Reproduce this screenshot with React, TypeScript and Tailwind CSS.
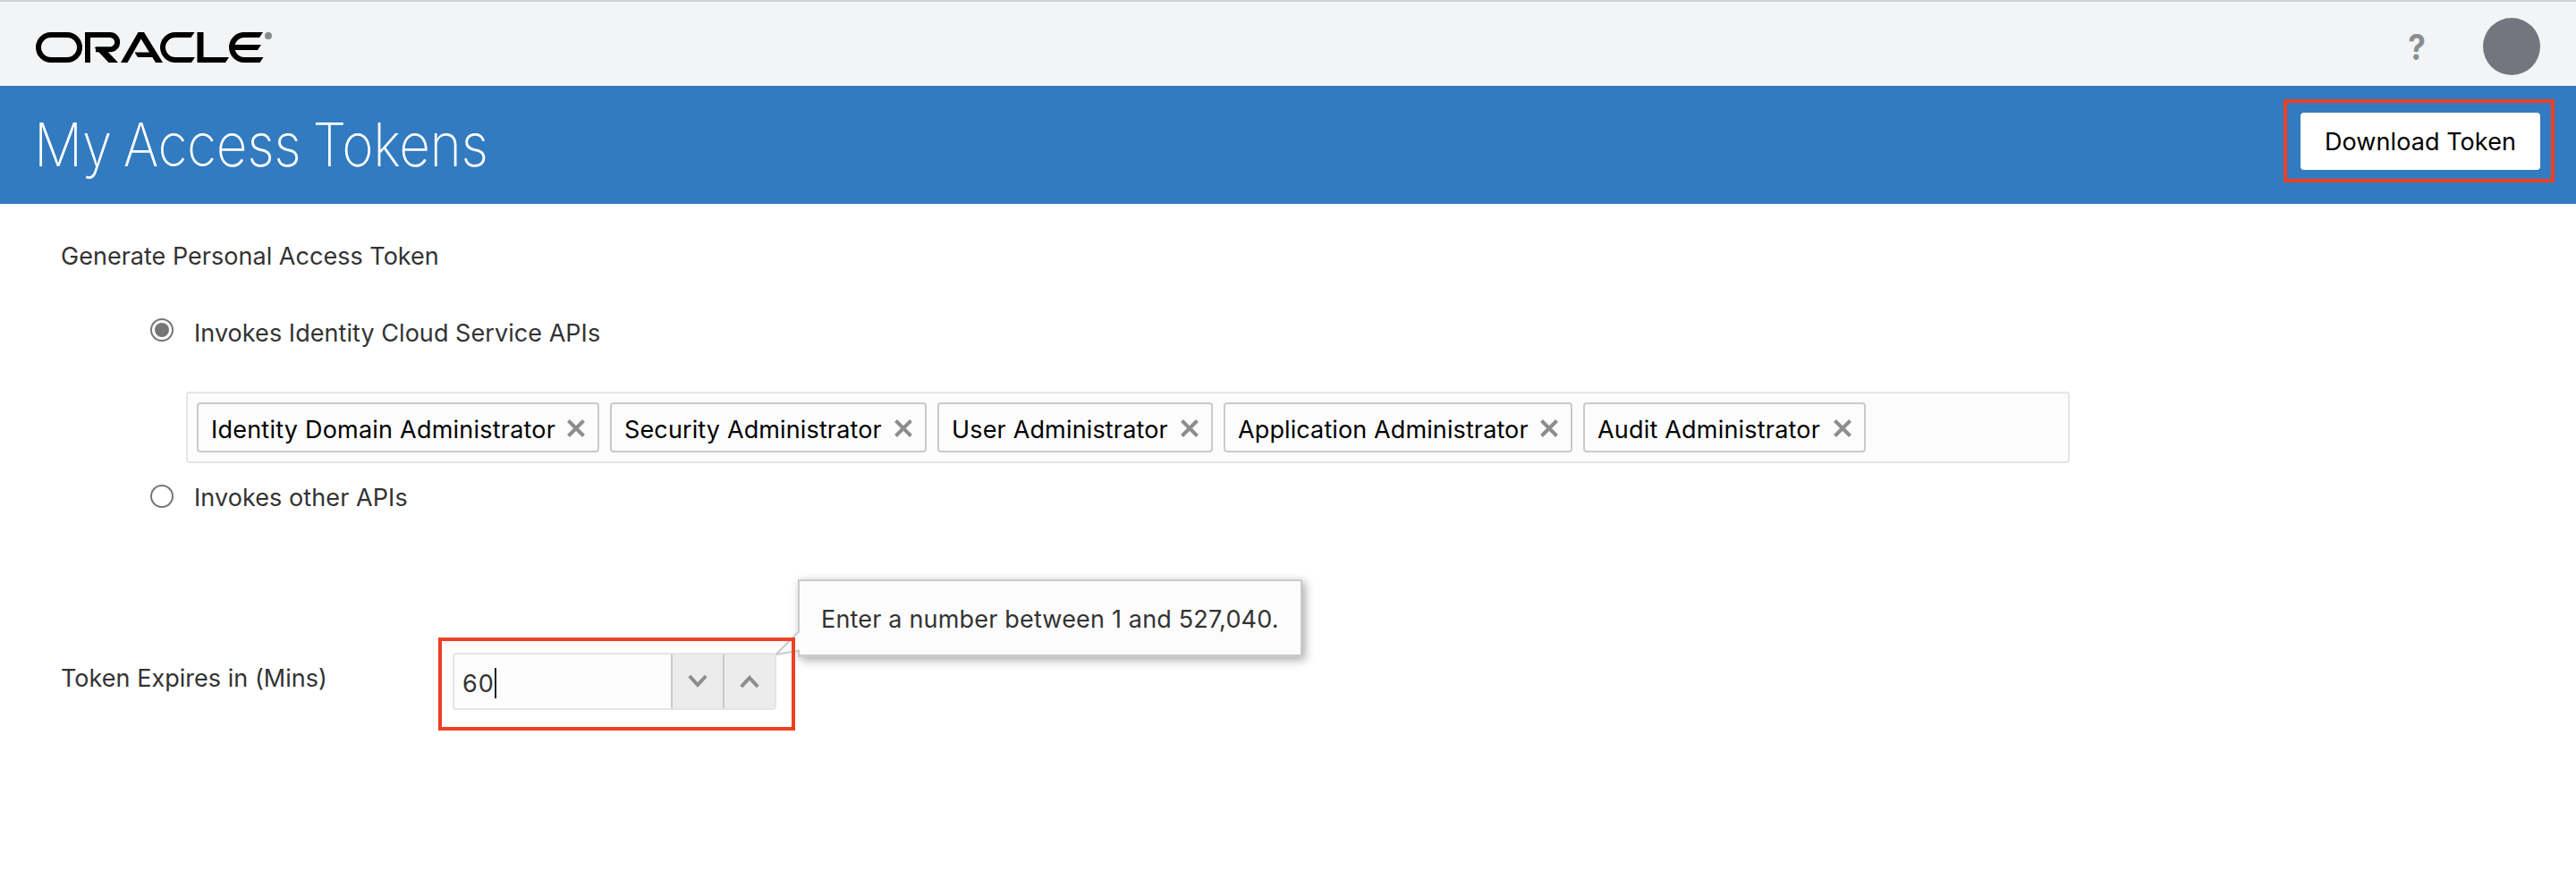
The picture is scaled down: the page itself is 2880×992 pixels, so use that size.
const ROLES = [
  { name: "Identity Domain Administrator", width: "w-[450px]", tracking: "tracking-[0.22px]" },
  { name: "Security Administrator", width: "w-[354px]", tracking: "tracking-[0.13px]" },
  { name: "User Administrator", width: "w-[308px]", tracking: "tracking-[0.16px]" },
  { name: "Application Administrator", width: "w-[390px]", tracking: "tracking-[0.11px]" },
  { name: "Audit Administrator", width: "w-[316px]", tracking: "tracking-[0.2px]" },
];

function OracleLogo() {
  return (
    <svg width="272" height="36" viewBox="0 0 272 36" fill="none" stroke="#000" strokeWidth="6" role="img" aria-label="Oracle">
      <rect x="3" y="3" width="46" height="28" rx="14" />
      <path d="M58 34V3H83a8 8 0 0 1 0 16.300H67" strokeWidth="6" />
      <path d="M65.500 17H76L92 34H81.500Z" fill="#000" stroke="none" />
      <path d="M95 34L114.500 0H121L142 34H134L117.700 7.500L102.500 34Z" fill="#000" stroke="none" />
      <path d="M110.500 22.500H133L136 28H114Z" fill="#000" stroke="none" />
      <path d="M177.500 0L173.500 6H156a11 11 0 0 0 0 22H178L174 34H156a17 17 0 0 1 0-34Z" fill="#000" stroke="none" />
      <path d="M180.500 0H187.500V28H216L212 34H180.500Z" fill="#000" stroke="none" />
      <path d="M254 0L250 6H233a11 11 0 0 0-10.300 8H252L248 20H222.700a11 11 0 0 0 10.300 8H254.500L250.500 34H233a17 17 0 0 1 0-34Z" fill="#000" stroke="none" />
      <circle cx="260" cy="4" r="3.200" fill="#b5b6b8" stroke="#808284" strokeWidth="1.500" />
      <path d="M259 6V2.500H261V4H259M260 4L261.300 6" stroke="#666" strokeWidth="0.900" />
    </svg>
  );
}

function Radio({ checked = false }: { checked?: boolean }) {
  return (
    <span className="flex size-[26px] items-center justify-center rounded-full border-2 border-[#767676] bg-white">
      {checked && <span className="size-4 rounded-full bg-[#767676]" />}
    </span>
  );
}

function Cross() {
  return (
    <svg className="mt-0.5" width="20" height="20" viewBox="0 0 20 20" fill="none" stroke="#8b8d8f" strokeWidth="4">
      <path d="M1.500 1.500L18.500 18.500M18.500 1.500L1.500 18.500" />
    </svg>
  );
}

function Chevron({ up = false }: { up?: boolean }) {
  return (
    <svg width="22" height="16" viewBox="0 0 22 16" fill="none" stroke="#8b8d8f" strokeWidth="4">
      <path d={up ? "M1.800 14L11 4L20.200 14" : "M1.800 2L11 12L20.200 2"} />
    </svg>
  );
}

export default function App() {
  return (
    <div className="h-[992px] w-[2880px] overflow-hidden bg-white font-['Inter',sans-serif] text-[27px] leading-10 text-[#333]">
      <header className="flex h-24 items-start justify-between border-t-2 border-[#d1d2d4] bg-[#f3f4f6] pl-10 pr-10">
        <div className="pt-[34px]">
          <OracleLogo />
        </div>
        <div className="flex items-center gap-16 pt-[18px]">
          <span className="text-[39px] font-bold text-[#8b8d90]">
            <span className="inline-block origin-right scale-x-90 pt-px">?</span>
          </span>
          <span className="size-16 rounded-full bg-[#74767f]" />
        </div>
      </header>

      <section className="flex h-[132px] items-start justify-between bg-[#327bc0] pl-[38px] pr-6">
        <h1 className="origin-left scale-x-90 pt-[21px] text-[67px] leading-[90px] font-[250] tracking-[-0.35px] text-white [word-spacing:-4px]">
          My Access Tokens
        </h1>
        <div className="mt-[15px] h-[93px] w-[303px] border-4 border-[#ee4023] pt-[11px] pl-[15px]">
          <button className="h-16 w-[268px] rounded bg-white pt-px text-[27px] leading-[63px] tracking-[0.08px] text-black">
            Download Token
          </button>
        </div>
      </section>

      <main className="pl-[68px] pt-[39px]">
        <h2 className="tracking-[0.02px]">Generate Personal Access Token</h2>

        <div className="mt-[46px] flex h-10 gap-[23px] pl-[100px]">
          <span className="pt-[3px]"><Radio checked /></span>
          <span className="tracking-[0.05px]">Invokes Identity Cloud Service APIs</span>
        </div>

        <div className="mt-[45px] ml-[140px] flex h-20 w-[2106px] items-center gap-3 rounded border-2 border-[#e5e5e5] bg-[#fcfcfc] pl-[10px]">
          {ROLES.map((role) => (
            <div key={role.name} className={`flex h-14 shrink-0 items-center justify-between rounded border-2 border-[#c9cacb] pr-[14px] pl-[14px] whitespace-nowrap text-black ${role.width} ${role.tracking}`}>
              <span className="pt-[5px]">{role.name}</span>
              <Cross />
            </div>
          ))}
        </div>

        <div className="mt-[19px] flex h-10 gap-[23px] pl-[100px]">
          <span className="pt-[5px]"><Radio /></span>
          <span className="tracking-[0.08px]">Invokes other APIs</span>
        </div>

        <div className="relative mt-[136px] flex">
          <div className="absolute -top-[65px] left-[824px] h-[87px] w-[564px] border-2 border-b-[3px] border-[#c9cacb] bg-[#fcfcfc] pt-[23px] pl-[24px] tracking-[0.18px] whitespace-nowrap shadow-[3px_3px_10px_rgba(0,0,0,0.35)]">
            Enter a number between 1 and 527,040.
            <svg className="absolute top-[53px] -left-[28px]" width="30" height="30" viewBox="0 0 30 30">
              <path d="M29 3L1.500 28.500L29 24Z" fill="#fcfcfc" />
              <path d="M28 2.500L1.500 29L28 24.500" fill="none" stroke="#c9cacb" strokeWidth="2" />
            </svg>
          </div>
          <label className="w-[422px] pt-[26px] tracking-[0.03px]">Token Expires in (Mins)</label>
          <div className="relative h-[104px] w-[399px] border-4 border-[#ee4023] pt-[13px] pl-3">
            <div className="flex h-16 w-[362px] overflow-hidden rounded border-2 border-[#e5e5e5] bg-[#fcfcfc]">
              <div className="flex w-[242px] items-center pl-[9px] tracking-[0.9px]">
                <span className="pt-[5px]">60</span>
                <span className="mt-[3px] h-[34px] w-[2px] bg-[#222]" />
              </div>
              <div className="flex w-[58px] items-center justify-center border-l-2 border-[#c9cacb] bg-[#ececec]"><Chevron /></div>
              <div className="flex w-[58px] items-center justify-center border-l-2 border-[#c9cacb] bg-[#ececec]"><Chevron up /></div>
            </div>
          </div>
        </div>
      </main>
    </div>
  );
}
